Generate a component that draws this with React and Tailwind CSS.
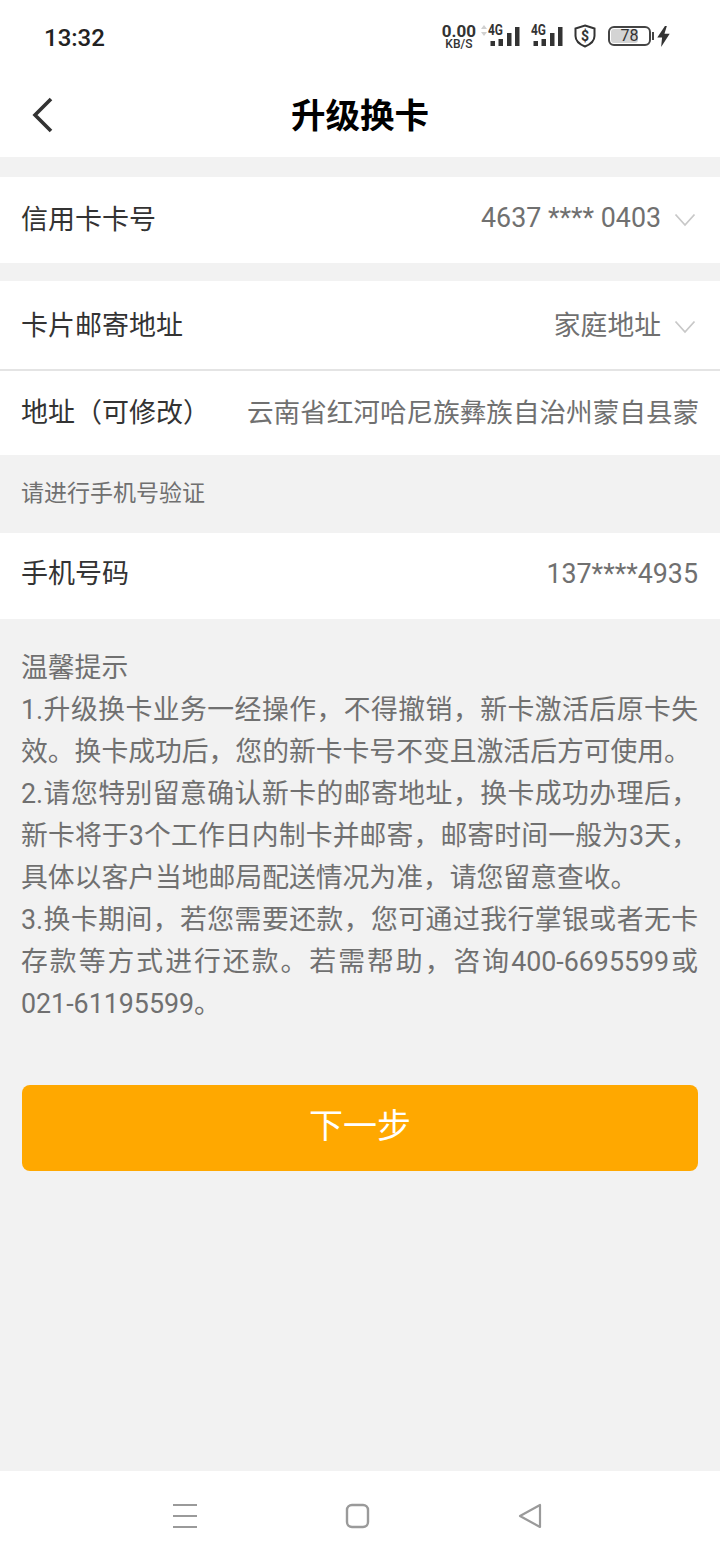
const font = { fontFamily: 'Roboto, "Noto Sans CJK SC", sans-serif' }

const Chevron = () => (
  <svg width="22" height="14" viewBox="0 0 22 14" fill="none" stroke="#c8c8c8" strokeWidth="1.8" className="ml-[13px]">
    <path d="M1.5 1.5 L11 12 L20.5 1.5" />
  </svg>
)

const Signal = () => (
  <svg width="32" height="24" viewBox="0 0 32 24" fill="#333" className="overflow-visible">
    <rect x="2.5" y="17" width="4.5" height="5" />
    <rect x="10.5" y="15" width="4.5" height="7" />
    <rect x="19" y="9" width="4.5" height="13" />
    <rect x="27" y="3" width="4.5" height="19" />
    <text x="0" y="11" fontSize="14" fontWeight="700" textLength="15" lengthAdjust="spacingAndGlyphs" fontFamily="Roboto, sans-serif">4G</text>
  </svg>
)

const StatusBar = () => (
  <div className="h-[72px] flex items-center justify-between pl-[44px] pr-[50px]">
    <span className="text-[24px] font-medium text-[#222] mt-[4px]">13:32</span>
    <div className="flex items-center">
      <div className="flex flex-col items-center text-[#333] font-bold mt-[1px]">
        <span className="text-[17px] leading-[14px]">0.00</span>
        <span className="text-[12px] leading-[12px] font-medium">KB/S</span>
      </div>
      <svg width="8" height="12" viewBox="0 0 8 12" fill="#d0d0d0" className="ml-[4px] mb-[10px]">
        <path d="M4 0 L7 4 H1 Z M1 7 H7 L4 11 Z" />
      </svg>
      <Signal />
      <div className="w-[11px]" />
      <Signal />
      <svg width="22" height="24" viewBox="0 0 22 24" fill="none" stroke="#333" strokeWidth="2" className="ml-[11px]">
        <path d="M11 1.5 L20.5 4.5 V12 C20.5 17.5 16 20.5 11 22.5 C6 20.5 1.5 17.5 1.5 12 V4.5 Z" />
        <text x="11" y="17" fontSize="14" fontWeight="700" textAnchor="middle" fill="#333" stroke="none" fontFamily="Roboto, sans-serif">$</text>
      </svg>
      <div className="ml-[12px] relative w-[43px] h-[20px] border-2 border-[#444] rounded-[6px] p-[1px] flex">
        <div className="w-[72%] bg-[#d4d4d4] rounded-[3px]" />
        <span className="absolute inset-0 flex items-center justify-center text-[16px] text-[#333]">78</span>
      </div>
      <div className="w-[2px] h-[8px] bg-[#444] ml-[1px]" />
      <svg width="13" height="21" viewBox="0 0 13 22" fill="#333" className="ml-[3px]">
        <path d="M8 0 L0 12 H5 L4 22 L13 8 H7.5 L10 0 Z" />
      </svg>
    </div>
  </div>
)

const Row = ({ label, value, chevron, h = 'h-[86px]', pad = '', valuePad = '' }) => (
  <div className={`${h} ${pad} bg-white flex items-center justify-between pl-[21px] pr-[22px]`}>
    <span className="text-[27px] text-[#333] shrink-0">{label}</span>
    <div className={`flex items-center text-[26.8px] text-[#707070] min-w-0 ${chevron ? 'pr-[2px]' : ''}`}>
      <span className={`whitespace-nowrap ${valuePad}`}>{value}</span>
      {chevron && <Chevron />}
    </div>
  </div>
)

export default function App() {
  return (
    <div style={font} className="w-[720px] h-[1560px] bg-[#f2f2f2] flex flex-col overflow-hidden">
      <div className="bg-white h-[157px]">
        <StatusBar />
        <div className="relative h-[85px] flex items-center justify-center">
          <svg width="24" height="36" viewBox="0 0 24 36" fill="none" stroke="#333" strokeWidth="3.6" className="absolute left-[31px] top-[25px]">
            <path d="M20 2 L4 18 L20 34" />
          </svg>
          <span className="text-[34.5px] font-bold text-black mt-[4px]">升级换卡</span>
        </div>
      </div>
      <div className="mt-[20px]">
        <Row label="信用卡卡号" value="4637 **** 0403" chevron valuePad="mb-[4px]" />
      </div>
      <div className="mt-[18px]">
        <Row label="卡片邮寄地址" value="家庭地址" chevron h="h-[88px]" pad="pt-[3px]" />
      </div>
      <div className="h-[2px] bg-[#e4e4e4]" />
      <div className="h-[84px] bg-white flex items-center pl-[21px] pr-[19px]">
        <span className="text-[27px] text-[#333] shrink-0 w-[226px]">地址（可修改）</span>
        <span className="text-[26.6px] text-[#707070] whitespace-nowrap">云南省红河哈尼族彝族自治州蒙自县蒙</span>
      </div>
      <div className="h-[78px] flex items-center pl-[21px] text-[23px] text-[#707070]">请进行手机号验证</div>
      <Row label="手机号码" value="137****4935" pad="pb-[4px]" />
      <div className="pl-[21px] pr-[22px] pt-[28px] text-[26.8px] leading-[42px] text-[#707070] text-justify">
        <p>温馨提示</p>
        <p>1.升级换卡业务一经操作，不得撤销，新卡激活后原卡失效。换卡成功后，您的新卡卡号不变且激活后方可使用。</p>
        <p>2.请您特别留意确认新卡的邮寄地址，换卡成功办理后，新卡将于3个工作日内制卡并邮寄，邮寄时间一般为3天，具体以客户当地邮局配送情况为准，请您留意查收。</p>
        <p>3.换卡期间，若您需要还款，您可通过我行掌银或者无卡存款等方式进行还款。若需帮助，咨询400-6695599或021-61195599。</p>
      </div>
      <div className="px-[22px] mt-[60px]">
        <button type="button" className="w-full h-[86px] bg-[#ffa800] rounded-[8px] text-white text-[34px] pb-[3px]">下一步</button>
      </div>
      <div className="flex-1" />
      <div className="h-[89px] bg-white flex items-center">
        <div className="w-full flex items-center justify-between pl-[173px] pr-[178px]">
          <svg width="24" height="26" viewBox="0 0 24 26" stroke="#9a9a9a" strokeWidth="2">
            <path d="M0 2 H24 M0 13 H24 M0 24 H24" />
          </svg>
          <svg width="26" height="26" viewBox="0 0 26 26" fill="none" stroke="#9a9a9a" strokeWidth="2.4">
            <rect x="2" y="2" width="21" height="22" rx="5" />
          </svg>
          <svg width="24" height="26" viewBox="0 0 24 26" fill="none" stroke="#9a9a9a" strokeWidth="2.2" strokeLinejoin="round">
            <path d="M22 2 V24 L2 13 Z" />
          </svg>
        </div>
      </div>
    </div>
  )
}
